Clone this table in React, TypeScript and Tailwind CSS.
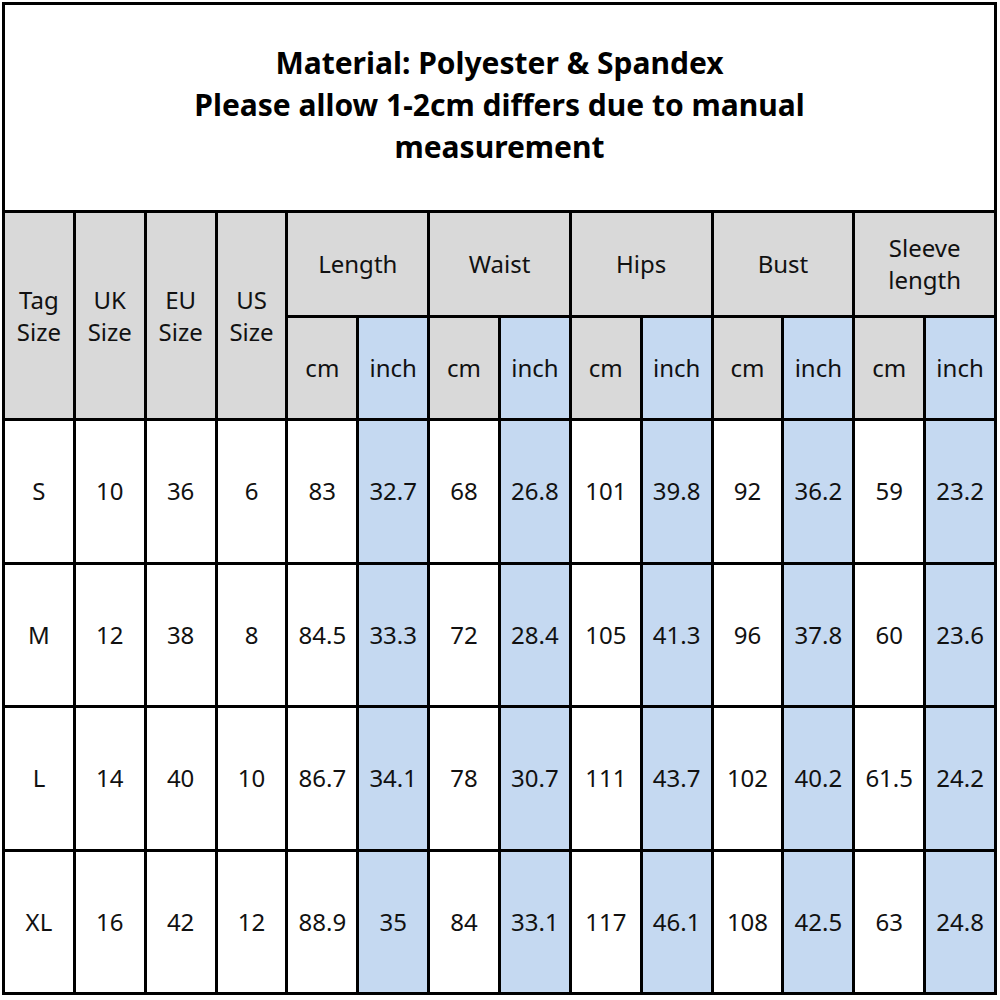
const groups = ['Length', 'Waist', 'Hips', 'Bust'];

const rows = [
  ['S', '10', '36', '6', '83', '32.7', '68', '26.8', '101', '39.8', '92', '36.2', '59', '23.2'],
  ['M', '12', '38', '8', '84.5', '33.3', '72', '28.4', '105', '41.3', '96', '37.8', '60', '23.6'],
  ['L', '14', '40', '10', '86.7', '34.1', '78', '30.7', '111', '43.7', '102', '40.2', '61.5', '24.2'],
  ['XL', '16', '42', '12', '88.9', '35', '84', '33.1', '117', '46.1', '108', '42.5', '63', '24.8'],
];

const cell = 'flex items-center justify-center text-center';

export default function App() {
  return (
    <div className="p-[2px] bg-white">
      <div
        className="grid w-[995px] h-[993px] bg-black p-[3px] gap-[3px] grid-cols-[repeat(14,1fr)] grid-rows-[205px_102px_100px_repeat(4,1fr)] text-[24px] leading-[32px] text-[#111]"
        style={{ fontFamily: '"Noto Sans", "Open Sans", sans-serif' }}
      >
        <div className={`${cell} col-span-14 bg-white flex-col pb-[6px] font-bold text-[30px] leading-[42px] text-black`}>
          <div>Material: Polyester &amp; Spandex</div>
          <div>Please allow 1-2cm differs due to manual</div>
          <div>measurement</div>
        </div>

        {['Tag', 'UK', 'EU', 'US'].map((s) => (
          <div key={s} className={`${cell} row-span-2 bg-[#d9d9d9] flex-col`}>
            <div>{s}</div>
            <div>Size</div>
          </div>
        ))}
        {groups.map((g) => (
          <div key={g} className={`${cell} col-span-2 bg-[#d9d9d9]`}>
            {g}
          </div>
        ))}
        <div className={`${cell} col-span-2 bg-[#d9d9d9] flex-col`}>
          <div>Sleeve</div>
          <div>length</div>
        </div>

        {[0, 1, 2, 3, 4].flatMap((i) => [
          <div key={`cm${i}`} className={`${cell} bg-[#d9d9d9]`}>cm</div>,
          <div key={`in${i}`} className={`${cell} bg-[#c5d9f1]`}>inch</div>,
        ])}

        {rows.map((r) =>
          r.map((v, j) => (
            <div
              key={`${r[0]}-${j}`}
              className={`${cell} ${j >= 4 && j % 2 === 1 ? 'bg-[#c5d9f1]' : 'bg-white'}`}
            >
              {v}
            </div>
          ))
        )}
      </div>
    </div>
  );
}
